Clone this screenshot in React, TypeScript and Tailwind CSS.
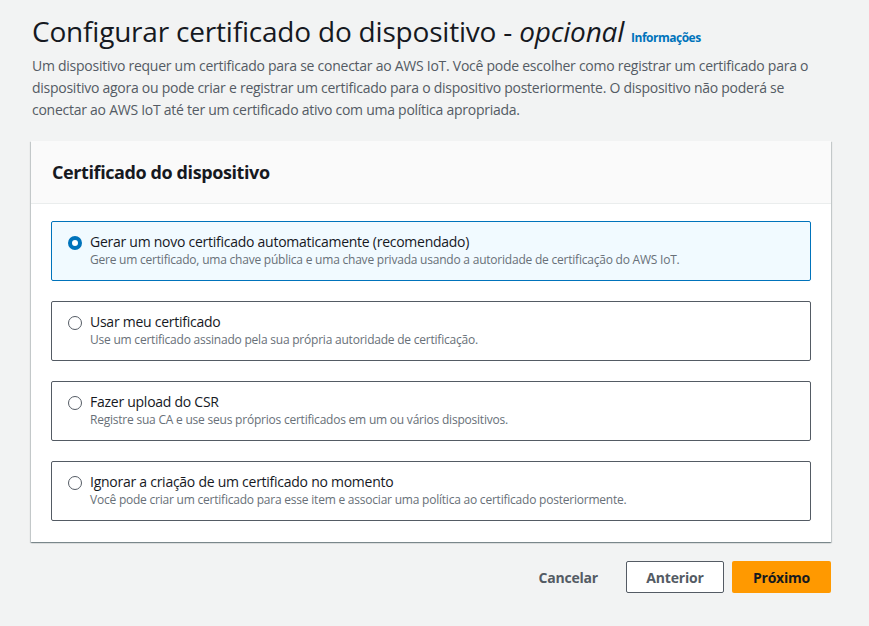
import { useState } from 'react';

const options = [
  {
    id: 'auto',
    label: 'Gerar um novo certificado automaticamente (recomendado)',
    description:
      'Gere um certificado, uma chave pública e uma chave privada usando a autoridade de certificação do AWS IoT.',
  },
  {
    id: 'own',
    label: 'Usar meu certificado',
    description: 'Use um certificado assinado pela sua própria autoridade de certificação.',
  },
  {
    id: 'csr',
    label: 'Fazer upload do CSR',
    description: 'Registre sua CA e use seus próprios certificados em um ou vários dispositivos.',
  },
  {
    id: 'skip',
    label: 'Ignorar a criação de um certificado no momento',
    description:
      'Você pode criar um certificado para esse item e associar uma política ao certificado posteriormente.',
  },
];

export default function App() {
  const [selected, setSelected] = useState('auto');

  return (
    <div
      className="min-h-[626px] w-full bg-[#f2f3f3] text-[#16191f]"
      style={{ fontFamily: '"Open Sans", "Noto Sans", Arial, sans-serif' }}
    >
      <div className="w-[800px] pl-[31px] box-content pt-[11px]">
        {/* Header */}
        <div className="pl-px">
          <h1 className="flex items-baseline text-[28px] leading-[40px] font-normal tracking-[-0.2px]">
            <span>
              Configurar certificado do dispositivo - <i>opcional</i>
            </span>
            <a className="ml-[7px] text-[12px] font-bold text-[#0073bb] tracking-[-0.5px]">Informações</a>
          </h1>
          <p className="mt-[-3px] text-[14px] leading-[22px] tracking-[-0.26px] text-[#545b64] w-[795px]">
            Um dispositivo requer um certificado para se conectar ao AWS IoT. Você pode escolher como registrar um
            certificado para o dispositivo agora ou pode criar e registrar um certificado para o dispositivo
            posteriormente. O dispositivo não poderá se conectar ao AWS IoT até ter um certificado ativo com uma
            política apropriada.
          </p>
        </div>

        {/* Card */}
        <div className="mt-[20px] bg-white shadow-[0_1px_1px_0_rgba(0,28,36,0.3),1px_1px_1px_0_rgba(0,28,36,0.15),-1px_1px_1px_0_rgba(0,28,36,0.15)]">
          <div className="h-[63px] bg-[#fafafa] border-b border-[#eaeded] flex items-center px-[21px]">
            <h2 className="text-[18px] font-bold leading-[22px] tracking-[-0.4px]">Certificado do dispositivo</h2>
          </div>
          <div className="px-[20px] pt-[17px] pb-[21px] flex flex-col gap-[20px]">
            {options.map((opt) => {
              const active = selected === opt.id;
              return (
                <label
                  key={opt.id}
                  onClick={() => setSelected(opt.id)}
                  className={`h-[60px] flex items-start gap-[8px] rounded-[2px] border px-[16px] pt-[10px] cursor-pointer ${
                    active ? 'border-[#0073bb] bg-[#f1faff]' : 'border-[#545b64] bg-white'
                  }`}
                >
                  <span className="mt-[4px] flex h-[14px] w-[14px] shrink-0 items-center justify-center">
                    {active ? (
                      <span className="h-[14px] w-[14px] rounded-full border-[4px] border-[#0073bb] bg-white" />
                    ) : (
                      <span className="h-[14px] w-[14px] rounded-full border-[1.5px] border-[#545b64] bg-white" />
                    )}
                  </span>
                  <span className="flex flex-col">
                    <span className="text-[14px] leading-[20px] tracking-[-0.26px] text-[#16191f]">{opt.label}</span>
                    <span className="text-[12px] leading-[16px] tracking-[-0.22px] text-[#687078]">
                      {opt.description}
                    </span>
                  </span>
                </label>
              );
            })}
          </div>
        </div>

        {/* Actions */}
        <div className="mt-[19px] flex items-center justify-end gap-[8px]">
          <button className="h-[32px] px-[20px] text-[14px] font-bold tracking-[-0.2px] text-[#545b64]">Cancelar</button>
          <button className="h-[32px] w-[98px] rounded-[2px] border border-[#545b64] bg-white text-[14px] font-bold tracking-[-0.2px] text-[#545b64]">
            Anterior
          </button>
          <button className="h-[32px] w-[99px] rounded-[2px] border border-transparent bg-[#ff9900] text-[14px] font-bold tracking-[-0.2px] text-[#16191f]">
            Próximo
          </button>
        </div>
      </div>
    </div>
  );
}
